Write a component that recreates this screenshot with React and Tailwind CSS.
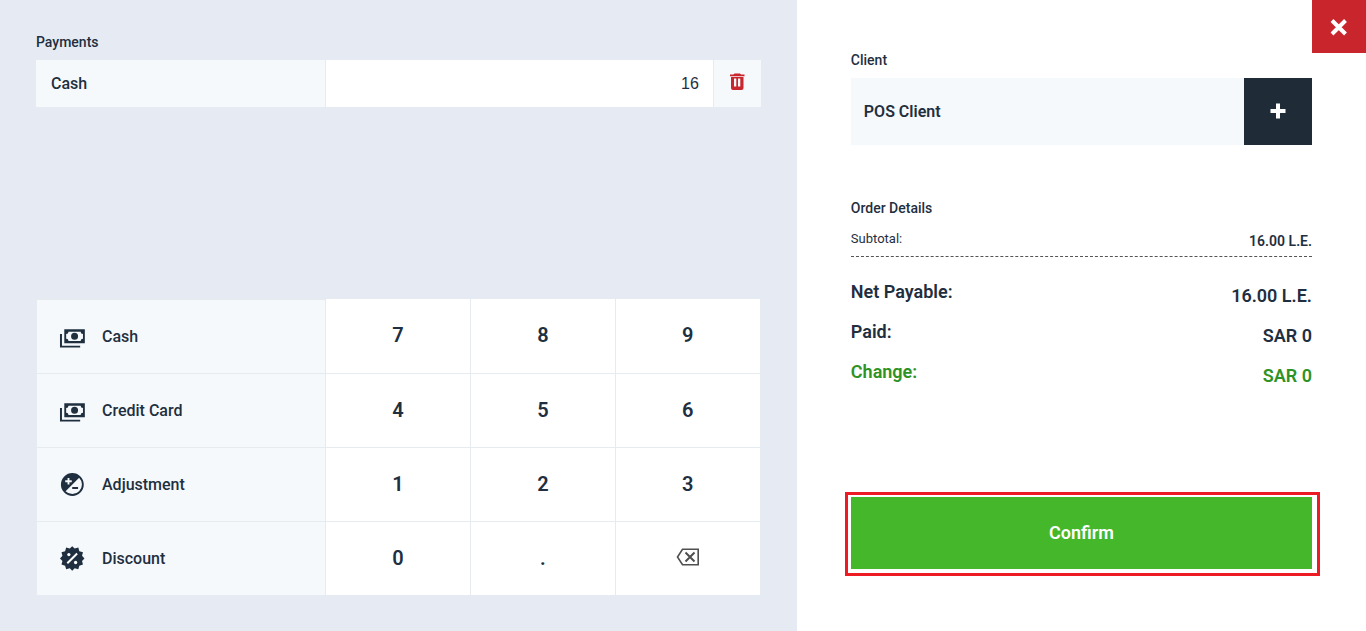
import { useState } from "react";

function CashIcon() {
    return (
        <svg viewBox="0 0 24 24" className="size-7" fill="currentColor" aria-hidden="true">
            <path d="M5.400 5.400h17.600v12H5.400v-12m8.800 3a3 3 0 0 1 3 3 3 3 0 0 1-3 3 3 3 0 0 1-3-3 3 3 0 0 1 3-3M9 7.400a2 2 0 0 1-2 2v4a2 2 0 0 1 2 2h10.400a2 2 0 0 1 2-2v-4a2 2 0 0 1-2-2H9m-7.300 2h1.700v10H19v1.700H1.700z" />
        </svg>
    );
}

function AdjustmentIcon() {
    return (
        <svg viewBox="0 0 24 24" className="size-7" fill="currentColor" aria-hidden="true">
            <path
                fillRule="evenodd"
                d="M12.300 1.800a9.800 9.800 0 1 0 0 19.600 9.800 9.800 0 0 0 0-19.600M6.500 17.400 18.100 5.800A8.200 8.200 0 0 1 6.500 17.400M8.200 6h1.600v2h2v1.600h-2v2H8.200v-2h-2V8h2V6"
            />
            <path d="M12.200 13.800h5v1.600h-5z" />
        </svg>
    );
}

function DiscountIcon() {
    return (
        <svg viewBox="0 0 24 24" className="size-7" aria-hidden="true">
            <path
                fill="currentColor"
                d="M12.200 1 14.300 3 17.400 2.200 18.300 5.300 21.400 6.200 20.600 9.300 22.700 11.500 20.600 13.700 21.400 16.800 18.300 17.700 17.400 20.800 14.300 20 12.200 22 10.100 20 7 20.800 6.100 17.700 3 16.800 3.800 13.700 1.700 11.500 3.800 9.300 3 6.200 6.100 5.300 7 2.200 10.100 3z"
            />
            <path d="M8 15.700 16.400 7.300" stroke="white" strokeWidth="1.700" />
            <circle cx="9.300" cy="8.200" r="1.400" fill="white" />
            <circle cx="15.100" cy="15" r="1.400" fill="white" />
        </svg>
    );
}

function TrashIcon() {
    return (
        <svg viewBox="0 0 16 18" className="h-[18px] w-4" aria-hidden="true">
            <path
                fill="currentColor"
                fillRule="evenodd"
                d="M5.500.5h5.500l1 1h3.500v1.800H1V1.500h3.500zM2 4h12.500v11a2 2 0 0 1-2 2H4a2 2 0 0 1-2-2zM5 5.500v8h2.300v-8zm4 0v8h2.300v-8z"
            />
        </svg>
    );
}

function BackspaceIcon() {
    return (
        <svg viewBox="0 0 24 18" className="h-[18px] w-6" fill="none" stroke="#4f4f4f" strokeWidth="1.600" aria-hidden="true">
            <path d="M6.500 1.300H22.200V16.700H6.500L1.500 9z" />
            <path d="m9.500 4.500 9 9m0-9-9 9" strokeWidth="2" />
        </svg>
    );
}

const methods = [
    { name: "Cash", Icon: CashIcon },
    { name: "Credit Card", Icon: CashIcon },
    { name: "Adjustment", Icon: AdjustmentIcon },
    { name: "Discount", Icon: DiscountIcon },
];

const keys = ["7", "8", "9", "4", "5", "6", "1", "2", "3", "0", ".", "back"];

function PaymentsPanel() {
    const [amount, setAmount] = useState("16");

    const press = (key) =>
        setAmount((value) => (key === "back" ? value.slice(0, -1) : value + key));

    return (
        <section className="flex w-7/12 flex-col justify-between bg-[#e6ebf3] px-9 pb-9 pt-[34px]">
            <div>
                <label htmlFor="amount" className="block pb-[10px] text-sm font-medium leading-4">
                    Payments
                </label>
                <div className="flex h-[47px]">
                    <div className="flex w-2/5 items-center border-r border-[#e6ebf0] bg-[#f5f9fc] pl-[15px] font-medium">
                        Cash
                    </div>
                    <input
                        id="amount"
                        value={amount}
                        onChange={(e) => setAmount(e.target.value)}
                        className="min-w-0 flex-1 bg-white pr-[14px] text-right font-['Liberation_Sans',sans-serif] outline-none"
                    />
                    <button
                        type="button"
                        aria-label="Remove payment"
                        onClick={() => setAmount("")}
                        className="flex w-12 items-center justify-center border-l border-[#e6ebf0] bg-[#f5f9fc] pb-1 text-[#c9252d]"
                    >
                        <TrashIcon />
                    </button>
                </div>
            </div>

            <div className="flex">
                {/* Payment methods */}
                <div className="w-2/5 border-l border-[#e6ebf0]">
                    {methods.map(({ name, Icon }) => (
                        <button
                            key={name}
                            type="button"
                            className="flex h-[74px] w-full items-center gap-4 border-r border-t border-[#e6ebf0] bg-[#f5f9fc] pl-[21px] font-medium"
                        >
                            <Icon />
                            {name}
                        </button>
                    ))}
                </div>

                {/* Keypad */}
                <div className="grid w-3/5 grid-cols-3">
                    {keys.map((key, i) => (
                        <button
                            key={key}
                            type="button"
                            aria-label={key === "back" ? "Backspace" : key}
                            onClick={() => press(key)}
                            className={`flex h-[74px] items-center justify-center border-r border-[#e6ebf0] bg-white text-xl font-semibold ${
                                i > 2 ? "border-t" : ""
                            } ${key === "back" ? "pb-1" : "pb-0.5"}`}
                        >
                            {key === "back" ? <BackspaceIcon /> : key}
                        </button>
                    ))}
                </div>
            </div>
        </section>
    );
}

function TotalRow({ label, value }) {
    return (
        <div className="flex h-10 justify-between text-lg font-semibold leading-6">
            <dt>{label}</dt>
            <dd className="pt-1">{value}</dd>
        </div>
    );
}

function OrderPanel() {
    return (
        <section className="relative flex w-5/12 flex-col bg-white px-[54px] pb-[62px] pt-[52px]">
            <button
                type="button"
                aria-label="Close"
                className="absolute right-0 top-0 flex h-[53px] w-[54px] items-center justify-center bg-[#c9252d] text-white"
            >
                <svg viewBox="0 0 18 18" className="size-[18px]" stroke="currentColor" strokeWidth="4" aria-hidden="true">
                    <path d="m2 2.500 13.500 13.500M15.500 2.500 2 16" />
                </svg>
            </button>

            <h2 className="text-sm font-medium leading-4">Client</h2>
            <div className="mt-[10px] flex h-[67px]">
                <div className="flex flex-1 items-center bg-[#f5f9fc] pl-[13px] font-semibold">POS Client</div>
                <button
                    type="button"
                    aria-label="Add client"
                    className="flex w-[68px] items-center justify-center bg-[#1f2c37] pb-0.5 text-white"
                >
                    <svg viewBox="0 0 16 16" className="size-4" stroke="currentColor" strokeWidth="4" aria-hidden="true">
                        <path d="M8 .500v15M.500 8h15" />
                    </svg>
                </button>
            </div>

            <h2 className="mt-[55px] text-sm font-medium leading-4">Order Details</h2>
            <dl>
                <div className="mb-[23px] mt-3 flex h-[29px] justify-between border-b border-dashed border-[#555]">
                    <dt className="pt-[3px] text-[13px] leading-4">Subtotal:</dt>
                    <dd className="pt-[5px] text-sm font-semibold leading-4">16.00 L.E.</dd>
                </div>
                <TotalRow label="Net Payable:" value="16.00 L.E." />
                <TotalRow label="Paid:" value="SAR 0" />
                <div className="text-[#2f9224]">
                    <TotalRow label="Change:" value="SAR 0" />
                </div>
            </dl>

            <div className="relative mt-auto">
                <button type="button" className="block h-[72px] w-full bg-[#44b72a] text-lg font-semibold text-white">
                    Confirm
                </button>
                <div className="pointer-events-none absolute -bottom-[7px] -left-[6px] -right-[8px] -top-[5px] border-[3px] border-[#ed1c24]" />
            </div>
        </section>
    );
}

export default function App() {
    return (
        <main className="flex min-h-screen font-[Roboto,sans-serif] text-base text-[#1f2f3f]">
            <PaymentsPanel />
            <OrderPanel />
        </main>
    );
}
